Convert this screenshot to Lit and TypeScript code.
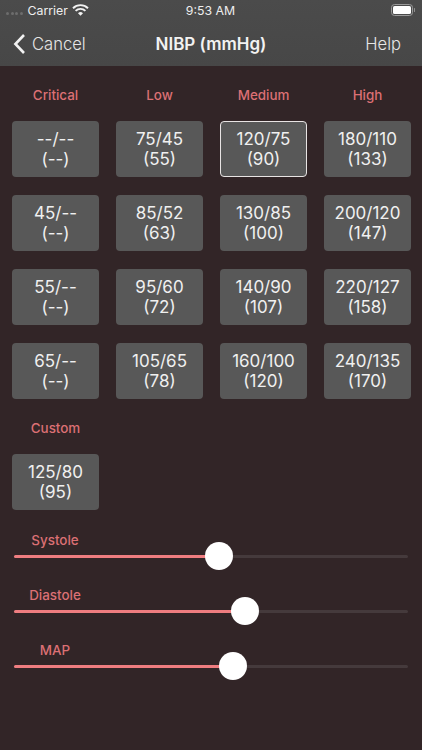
import { LitElement, html, css, svg } from "lit";
import { customElement } from "lit/decorators.js";

const COLS = [
  { title: "Critical", items: [["--/--", "(--)"], ["45/--", "(--)"], ["55/--", "(--)"], ["65/--", "(--)"]] },
  { title: "Low", items: [["75/45", "(55)"], ["85/52", "(63)"], ["95/60", "(72)"], ["105/65", "(78)"]] },
  { title: "Medium", items: [["120/75", "(90)"], ["130/85", "(100)"], ["140/90", "(107)"], ["160/100", "(120)"]] },
  { title: "High", items: [["180/110", "(133)"], ["200/120", "(147)"], ["220/127", "(158)"], ["240/135", "(170)"]] },
];
const SLIDERS = [
  { label: "Systole", x: 204.5 },
  { label: "Diastole", x: 231 },
  { label: "MAP", x: 218.5 },
];

@customElement("app-root")
export class AppRoot extends LitElement {
  static styles = css`
    :host {
      display: block;
      width: 422px;
      height: 750px;
      background: #322527;
      font-family: Inter, "Liberation Sans", sans-serif;
      color: #f2f2f2;
      overflow: hidden;
    }
    .top {
      height: 66px;
      background: linear-gradient(#4b4b4b, #474747);
      display: flex;
      flex-direction: column;
    }
    .status {
      height: 20px;
      display: grid;
      grid-template-columns: 1fr auto 1fr;
      align-items: center;
      padding: 0 7px 0 6px;
      font-size: 12.3px;
      color: #eee;
    }
    .status-left { display: flex; align-items: center; gap: 4px; }
    .dots { display: flex; gap: 1.5px; margin-top: 6px; margin-right: 1px; }
    .dots i { width: 3px; height: 3px; border-radius: 50%; background: #6d6d6d; }
    .status-right { display: flex; justify-content: flex-end; }
    .nav {
      flex: 1;
      display: grid;
      grid-template-columns: 1fr auto 1fr;
      align-items: center;
      padding: 1px 21px 0;
      font-size: 16.6px;
    }
    .back { display: flex; align-items: center; gap: 6px; margin-left: -8px; color: #e6e6e6; font-weight: 300; }
    .title { font-weight: 600; font-size: 17px; }
    .help { justify-self: end; color: #e6e6e6; font-weight: 300; }
    .main { padding: 0 11px 0 12px; }
    .grid {
      display: grid;
      grid-template-columns: repeat(4, 87px);
      column-gap: 17px;
    }
    .col { display: flex; flex-direction: column; row-gap: 18px; }
    .head {
      height: 55px;
      margin-bottom: -18px;
      display: flex;
      align-items: center;
      justify-content: center;
      font-size: 13.4px;
      font-weight: 500;
      color: #dc7074;
      padding-top: 3px;
      box-sizing: border-box;
    }
    .btn {
      height: 56px;
      box-sizing: border-box;
      background: #585858;
      border-radius: 4px;
      display: flex;
      flex-direction: column;
      align-items: center;
      justify-content: center;
      font-size: 17px;
      line-height: 20px;
      color: #f0f0f0;
    }
    .btn.sel { border: 1.5px solid #e8e4e4; }
    .custom { width: 87px; margin-top: 11px; display: flex; flex-direction: column; }
    .custom .head { height: 44px; margin: 0; padding: 0 0 8px; }
    .sliders { margin-top: 20px; display: flex; flex-direction: column; gap: 13px; }
    .slider { height: 42px; display: flex; flex-direction: column; }
    .label {
      width: 86px;
      height: 20px;
      display: flex;
      align-items: center;
      justify-content: center;
      font-size: 13.4px;
      font-weight: 500;
      color: #dc7074;
    }
    .track {
      position: relative;
      height: 3px;
      margin: 5px 3px 0 2px;
      background: #453a3c;
      border-radius: 2px;
    }
    .fill { height: 100%; background: #ef7d80; border-radius: 2px; }
    .thumb {
      position: absolute;
      top: -13px;
      width: 28px;
      height: 28px;
      margin-left: -14px;
      border-radius: 50%;
      background: #fff;
    }
  `;

  private btn(b: string[], sel = false) {
    return html`<div class="btn ${sel ? "sel" : ""}"><span>${b[0]}</span><span>${b[1]}</span></div>`;
  }

  render() {
    return html`
      <div class="top">
        <div class="status">
          <div class="status-left">
            <div class="dots"><i></i><i></i><i></i><i></i></div>
            <span>Carrier</span>
            <svg width="17" height="12" viewBox="0 0 17 12">
              <path d="M1 4.2a10.8 10.8 0 0 1 15 0" fill="none" stroke="#f2f2f2" stroke-width="1.9"/>
              <path d="M3.6 6.9a7 7 0 0 1 9.8 0" fill="none" stroke="#f2f2f2" stroke-width="1.9"/>
              <path d="M6 9.2l2.5 2.5 2.5-2.5a3.5 3.5 0 0 0-5 0z" fill="#f2f2f2"/>
            </svg>
          </div>
          <span>9:53 AM</span>
          <div class="status-right">
            <svg width="24" height="12" viewBox="0 0 24 12">
              <rect x="0.5" y="0.5" width="21" height="11" rx="3" fill="none" stroke="#9a9a9a"/>
              <rect x="2" y="2" width="18" height="8" rx="1.6" fill="#fff"/>
              <path d="M23 4v4a2 2 0 0 0 0-4z" fill="#8f8f8f"/>
            </svg>
          </div>
        </div>
        <div class="nav">
          <div class="back">
            ${svg`<svg width="13" height="22" viewBox="0 0 13 22"><path d="M11 2 2.4 11 11 20" fill="none" stroke="#f2f2f2" stroke-width="2.6"/></svg>`}
            <span>Cancel</span>
          </div>
          <div class="title">NIBP (mmHg)</div>
          <div class="help">Help</div>
        </div>
      </div>
      <div class="main">
        <div class="grid">
          ${COLS.map(
            (c) => html`<div class="col">
              <div class="head">${c.title}</div>
              ${c.items.map((b) => this.btn(b, b[0] === "120/75"))}
            </div>`
          )}
        </div>
        <div class="custom">
          <div class="head">Custom</div>
          ${this.btn(["125/80", "(95)"])}
        </div>
        <div class="sliders">
          ${SLIDERS.map(
            (s) => html`<div class="slider">
              <div class="label">${s.label}</div>
              <div class="track">
                <div class="fill" style="width:${s.x}px"></div>
                <div class="thumb" style="left:${s.x}px"></div>
              </div>
            </div>`
          )}
        </div>
      </div>
    `;
  }
}
